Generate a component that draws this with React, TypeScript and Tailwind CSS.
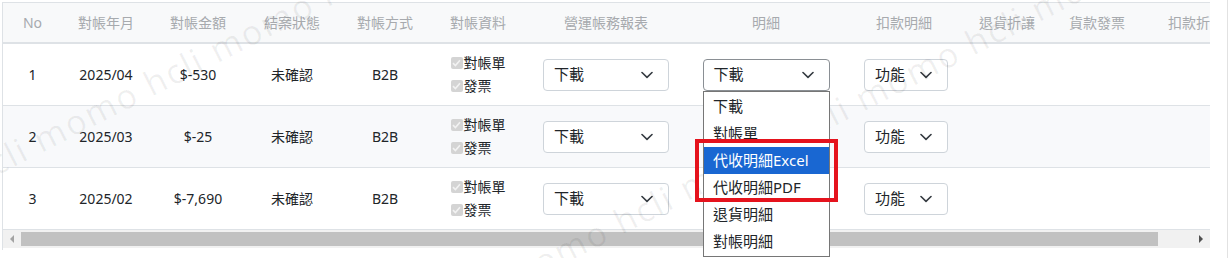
import React from "react"

const headers = [
  { label: "No", w: "w-[59px]" },
  { label: "對帳年月", w: "w-[88px]" },
  { label: "對帳金額", w: "w-[96px]" },
  { label: "結案狀態", w: "w-[92px]" },
  { label: "對帳方式", w: "w-[94px]" },
  { label: "對帳資料", w: "w-[92px]" },
  { label: "營運帳務報表", w: "w-[164px]" },
  { label: "明細", w: "w-[156px]" },
  { label: "扣款明細", w: "w-[120px]" },
  { label: "退貨折讓", w: "w-[86px]" },
  { label: "貨款發票", w: "w-[94px]" },
  { label: "扣款折讓", w: "w-[104px]" },
]

const rows = [
  { no: 1, ym: "2025/04", amount: "$-530" },
  { no: 2, ym: "2025/03", amount: "$-25" },
  { no: 3, ym: "2025/02", amount: "$-7,690" },
]

const menuItems = ["下載", "對帳單", "代收明細Excel", "代收明細PDF", "退貨明細", "對帳明細"]

function Chevron() {
  return (
    <svg width="12" height="8" viewBox="0 0 12 8" fill="none">
      <path d="M1 1.5L6 6.3L11 1.5" stroke="#343a40" strokeWidth="1.6" strokeLinecap="round" strokeLinejoin="round" />
    </svg>
  )
}

function Select({ label, width, active }: { label: string; width: string; active?: boolean }) {
  return (
    <div
      className={`${width} h-[32px] flex items-center justify-between pl-[10px] pr-[15px] rounded-[4px] border bg-white text-[15px] text-[#212529] ${
        active ? "border-[#8a8f94]" : "border-[#ced4da]"
      }`}
    >
      <span>{label}</span>
      <Chevron />
    </div>
  )
}

function CheckItem({ label }: { label: string }) {
  return (
    <div className="flex items-center h-[23px]">
      <span className="w-[12px] h-[12px] rounded-[2px] bg-[#d4d4d4] flex items-center justify-center mr-[1px]">
        <svg width="9" height="8" viewBox="0 0 9 8" fill="none">
          <path d="M1 4.2L3.4 6.5L8 1.3" stroke="#f2f2f2" strokeWidth="1.6" />
        </svg>
      </span>
      <span className="text-[#212529]">{label}</span>
    </div>
  )
}

export default function App() {
  return (
    <div className="relative w-[1228px] h-[258px] border-r border-[#e2e2e2] overflow-hidden bg-white font-['Noto_Sans','Noto_Sans_CJK_TC',sans-serif] text-[14px]">
      <div className="ml-[2px] mt-[2px] w-[1208px] border-l border-t border-[#dee2e6] overflow-hidden">
        <div className="w-[1245px]">
          <div className="flex h-[41px] bg-[#f8f9fa] border-b-2 border-[#dee2e6] text-[#a7aaae]">
            {headers.map((h) => (
              <div key={h.label} className={`${h.w} shrink-0 flex items-center justify-center whitespace-nowrap`}>
                {h.label}
              </div>
            ))}
          </div>

          {rows.map((r, i) => (
            <div
              key={r.no}
              className={`flex h-[62px] border-b border-[#dee2e6] text-[#212529] ${i === 1 ? "bg-[#f8f9fb]" : "bg-white"}`}
            >
              <div className="w-[59px] shrink-0 flex items-center justify-center">{r.no}</div>
              <div className="w-[88px] shrink-0 flex items-center justify-center">{r.ym}</div>
              <div className="w-[96px] shrink-0 flex items-center justify-center">{r.amount}</div>
              <div className="w-[92px] shrink-0 flex items-center justify-center">未確認</div>
              <div className="w-[94px] shrink-0 flex items-center justify-center">B2B</div>
              <div className="w-[92px] shrink-0 flex items-center justify-center">
                <div className="flex flex-col -mt-[1px]">
                  <CheckItem label="對帳單" />
                  <CheckItem label="發票" />
                </div>
              </div>
              <div className="w-[164px] shrink-0 flex items-center justify-center">
                <Select label="下載" width="w-[126px]" />
              </div>
              <div className="w-[156px] shrink-0 flex items-center justify-center">
                <Select label="下載" width="w-[127px]" active={i === 0} />
              </div>
              <div className="w-[120px] shrink-0 flex items-center pl-[20px]">
                <Select label="功能" width="w-[84px]" />
              </div>
              <div className="w-[86px] shrink-0" />
              <div className="w-[94px] shrink-0" />
              <div className="w-[104px] shrink-0" />
            </div>
          ))}
        </div>

        <div className="relative h-[18px] bg-[#f1f1f1] flex items-center">
          <span className="ml-[7px] w-0 h-0 border-y-[4px] border-y-transparent border-r-[4px] border-r-[#a3a3a3]" />
          <div className="ml-[7px] w-[1137px] h-[14px] bg-[#c1c1c1]" />
          <span className="ml-[41px] w-0 h-0 border-y-[4px] border-y-transparent border-l-[4px] border-l-[#505050]" />
        </div>
        <div className="h-[2px]" />
      </div>

      {/* watermark */}
      <div className="pointer-events-none absolute inset-0 overflow-hidden">
        <span className="absolute left-[-30px] top-[150px] origin-left -rotate-[27deg] whitespace-nowrap text-[34px] tracking-[2px] text-black/[0.06]">
          hcli momo hcli momo hcli momo
        </span>
        <span className="absolute left-[440px] top-[288px] origin-left -rotate-[27deg] whitespace-nowrap text-[34px] tracking-[2px] text-black/[0.06]">
          hcli momo hcli momo hcli momo hcli momo
        </span>
      </div>

      {/* open dropdown list */}
      <div className="absolute left-[703px] top-[91px] w-[127px] h-[166px] bg-white border border-[#767676] pt-[1px] text-[15px] text-[#212529]">
        {menuItems.map((m, i) => (
          <div
            key={m}
            className={`h-[27px] flex items-center pl-[9px] whitespace-nowrap ${i === 2 ? "bg-[#1967d2] text-white" : ""}`}
          >
            {m}
          </div>
        ))}
      </div>

      {/* red highlight box */}
      <div className="absolute left-[695px] top-[139px] w-[143px] h-[63px] border-[4px] border-[#e5131d]" />
    </div>
  )
}
